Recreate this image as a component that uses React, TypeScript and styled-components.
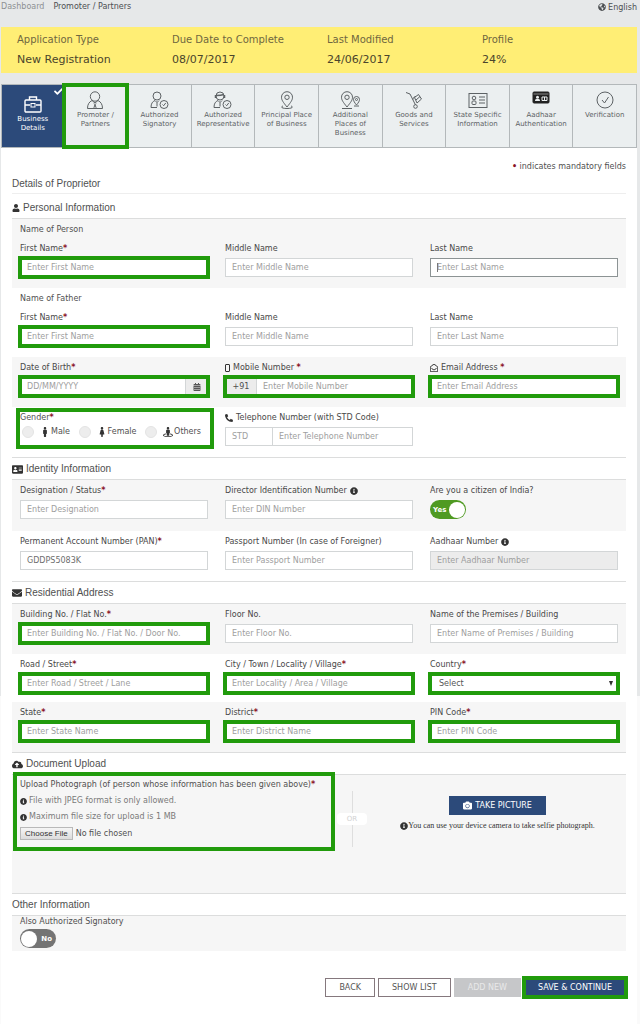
import React, { useId, useState } from "react";
import styled, { createGlobalStyle, css } from "styled-components";
import {
  FaAddressCard,
  FaCalendarAlt,
  FaCamera,
  FaCheck,
  FaCloudUploadAlt,
  FaEnvelope,
  FaFemale,
  FaGlobeAmericas,
  FaInfoCircle,
  FaMale,
  FaPhoneAlt,
  FaRegEnvelopeOpen,
  FaStreetView,
  FaUser,
} from "react-icons/fa";

const sans = `"DejaVu Sans", Verdana, sans-serif`;
const heading = `"Liberation Sans", Arial, sans-serif`;
const serif = `"Liberation Serif", "Times New Roman", serif`;
const green = "#219b0c";
const navy = "#2c4a7a";
const line = "#dcdddd";

const GlobalStyle = createGlobalStyle`
  *, *::before, *::after { box-sizing: border-box; }
  body {
    margin: 0;
    background: linear-gradient(#e6e8e9 696px, #fafafa 696px) no-repeat #fafafa;
    color: #505050;
    font-family: ${sans};
    font-size: 8px;
    line-height: 12px;
  }
  input, select, button { font-family: inherit; font-size: inherit; margin: 0; }
`;

const marked = css`
  outline: 4px solid ${green};
  outline-offset: -2px;
`;

const Page = styled.div`
  padding: 0 3px 0 1px;
`;

const TopBar = styled.header`
  display: flex;
  justify-content: space-between;
  padding: 0 0 13px;
  line-height: 14px;
`;

const Crumbs = styled.nav`
  display: flex;
  gap: 9px;
  a { color: #8d9093; text-decoration: none; }
  span { color: #4c4f52; }
`;

const Language = styled.button`
  display: flex;
  align-items: center;
  gap: 2px;
  padding: 0;
  border: 0;
  background: none;
  color: #4c4f52;
`;

const Summary = styled.dl`
  display: grid;
  grid-template-columns: repeat(4, 1fr);
  margin: 0;
  padding: 6px 0 6px 16px;
  background: #ffee75;
  line-height: 14px;
`;

const SummaryItem = styled.div`
  display: flex;
  flex-direction: column;
  gap: 6px;
  dt { font-size: 10px; color: #6f6740; }
  dd { margin: 0; font-size: 11px; color: #4b452c; }
`;

const Tabs = styled.nav`
  display: grid;
  grid-template-columns: 62fr repeat(9, 64fr);
  margin-top: 11px;
  border: 1px solid #b3b8ba;
`;

const Tab = styled.a<{ $done?: boolean; $marked?: boolean }>`
  position: relative;
  display: flex;
  flex-direction: column;
  align-items: center;
  gap: 2px;
  min-height: 62px;
  padding-top: ${(p) => (p.$done ? 10 : 6)}px;
  border-left: ${(p) => (p.$done || p.$marked ? 0 : 1)}px solid #b3b8ba;
  background: ${(p) => (p.$done ? navy : "#ebeff0")};
  color: ${(p) => (p.$done ? "#fff" : "#5d6265")};
  font-size: 7px;
  line-height: 9px;
  text-align: center;
  text-decoration: none;
  white-space: pre;
  ${(p) => p.$marked && css`${marked} z-index: 1;`}
  svg { flex: none; }
`;

const TabCheck = styled(FaCheck)`
  position: absolute;
  top: 2px;
  right: 1px;
`;

const Main = styled.main`
  min-height: 876px;
  padding: 13px 11px 24px;
  background: #fff;
`;

const Mandatory = styled.p`
  margin: 0;
  text-align: right;
`;

const Star = styled.span`
  color: #8a1226;
  font-weight: 700;
`;

const PageTitle = styled.h1`
  margin: 0;
  padding: 4px 0 2px;
  border-bottom: 1px solid #eee;
  font: 400 10px/14px ${heading};
`;

const SectionTitle = styled.h2<{ $first?: boolean }>`
  display: flex;
  align-items: center;
  gap: 3px;
  margin: 0;
  padding: ${(p) => (p.$first ? "7px 0 3px" : "4px 0 3px")};
  border-bottom: 1px solid ${line};
  border-top: ${(p) => (p.$first ? 0 : 1)}px solid ${line};
  font: 400 10px/14px ${heading};
  svg { color: #333; }
`;

const Row = styled.div<{ $shade?: boolean; $end?: number }>`
  display: grid;
  grid-template-columns: repeat(3, minmax(0, 1fr));
  column-gap: 17px;
  padding: 5px 8px ${(p) => p.$end ?? 11}px;
  background: ${(p) => (p.$shade ? "#f6f6f6" : "#fff")};
`;

const RowTitle = styled.h3`
  grid-column: 1 / -1;
  margin: 0 0 7px;
  font: inherit;
`;

const Field = styled.div`
  position: relative;
  display: flex;
  flex-direction: column;
  gap: 3px;
`;

const Label = styled.label`
  display: flex;
  align-items: center;
  gap: 3px;
  height: 12px;
  white-space: nowrap;
  color: #484848;
  svg { color: #333; }
`;

const Input = styled.input<{ $active?: boolean; $marked?: boolean }>`
  width: 100%;
  min-width: 0;
  height: 19px;
  padding: 0 6px;
  border: 1px solid ${(p) => (p.$active ? "#8c9394" : "#d3d6d7")};
  border-radius: 0;
  background: #fff;
  color: #6d6d6d;
  ${(p) => p.$marked && marked}
  &::placeholder { color: #9e9e9e; opacity: 1; }
  &:disabled { background: #ececec; }
`;

const Caret = styled.span`
  position: absolute;
  left: 7px;
  bottom: 5px;
  width: 1px;
  height: 9px;
  background: #777;
`;

const Group = styled.div<{ $marked?: boolean }>`
  display: flex;
  ${(p) => p.$marked && marked}
`;

const AddOn = styled.span`
  display: flex;
  flex: none;
  align-items: center;
  justify-content: center;
  width: 31px;
  border: 1px solid #d3d6d7;
  border-right: 0;
  background: #ececec;
`;

const DateButton = styled.button`
  display: flex;
  flex: none;
  align-items: center;
  justify-content: center;
  width: 22px;
  padding: 0;
  border: 1px solid #d3d6d7;
  border-left: 0;
  background: #ececec;
  color: #555;
`;

const StdInput = styled(Input)`
  flex: none;
  width: 25%;
  border-right: 0;
`;

const SelectWrap = styled.div`
  position: relative;
  ${marked}
  svg { position: absolute; right: 5px; top: 7px; pointer-events: none; }
`;

const Select = styled.select`
  display: block;
  width: 100%;
  height: 19px;
  padding: 0 8px;
  border: 1px solid #d3d6d7;
  appearance: none;
  background: #fff;
  color: #555;
`;

const GenderBox = styled.div`
  display: flex;
  flex-direction: column;
  height: 33px;
  margin-right: -2px;
  background: #fff;
  outline: 4px solid ${green};
`;

const RadioRow = styled.div`
  display: flex;
  justify-content: space-between;
  padding: 2px 9px 0 2px;
`;

const Choice = styled.label`
  display: flex;
  align-items: center;
  gap: 1px;
  svg { color: #333; }
`;

const Radio = styled.input`
  width: 12px;
  height: 12px;
  margin-right: 5px;
  border: 1px solid #e4e4e4;
  border-radius: 50%;
  appearance: none;
  background: #ededed;
  &:checked { background: #888; }
`;

const Switch = styled.label<{ $on: boolean }>`
  position: relative;
  display: flex;
  flex-direction: ${(p) => (p.$on ? "row" : "row-reverse")};
  align-items: center;
  justify-content: space-between;
  width: 36px;
  height: 19px;
  padding: ${(p) => (p.$on ? "0 1px 0 3px" : "0 4px 0 1px")};
  border-radius: 10px;
  background: ${(p) => (p.$on ? "#4f9a22" : "#747474")};
  color: #fff;
  font-size: 7px;
  font-weight: 700;
  input { position: absolute; inset: 0; width: 100%; height: 100%; opacity: 0; }
`;

const Knob = styled.span`
  width: 16px;
  height: 16px;
  border-radius: 50%;
  background: #fff;
`;

const UploadPanel = styled.div`
  display: grid;
  grid-template-columns: 323fr 34fr 257fr;
  align-items: start;
  height: 118px;
  background: #f6f6f6;
`;

const UploadBox = styled.div`
  display: flex;
  flex-direction: column;
  gap: 4px;
  margin: -3px 0 0 1px;
  padding: 3px 3px 6px;
  border: 4px solid ${green};
`;

const Note = styled.p`
  display: flex;
  align-items: center;
  gap: 2px;
  margin: 0;
  color: #7a7a7a;
  svg { color: #333; }
`;

const FileInput = styled.input`
  height: 14px;
  line-height: 12px;
  &::file-selector-button {
    height: 13px;
    margin: 0 3px 0 0;
    padding: 0 4px;
    border: 1px solid #b9b9b9;
    background: linear-gradient(#f6f6f6, #dcdcdc);
    color: #333;
    font: 8px/11px ${heading};
  }
`;

const Divider = styled.div`
  display: flex;
  flex-direction: column;
  align-items: center;
  margin: 16px 2px 0;
  color: #d2d2d2;
  &::before, &::after { content: ""; width: 1px; height: 22px; background: #dedede; }
  span { align-self: stretch; background: #fff; border-radius: 4px; text-align: center; font-size: 7px; }
`;

const Capture = styled.div`
  display: flex;
  flex-direction: column;
  align-items: center;
  gap: 5px;
  padding-top: 21px;
`;

const CaptureNote = styled.p`
  display: flex;
  align-items: center;
  margin: 0;
  color: #333;
  font-family: ${serif};
  white-space: nowrap;
`;

const Button = styled.button<{ $kind?: "primary" | "muted"; $marked?: boolean }>`
  display: flex;
  align-items: center;
  gap: 3px;
  height: 19px;
  padding: 0 13px;
  border: 1px solid ${(p) => (p.$kind === "primary" ? navy : p.$kind === "muted" ? "#c6c7c9" : "#85787d")};
  background: ${(p) => (p.$kind === "primary" ? navy : p.$kind === "muted" ? "#c6c7c9" : "#fff")};
  color: ${(p) => (p.$kind === "primary" ? "#fff" : p.$kind === "muted" ? "#e9e9ea" : "#555")};
  ${(p) => p.$marked && marked}
`;

const OtherPanel = styled.div`
  display: flex;
  flex-direction: column;
  gap: 1px;
  padding: 0 8px 3px;
  background: #f6f6f6;
`;

const Footer = styled.footer`
  display: flex;
  justify-content: flex-end;
  gap: 3px;
  margin-top: 27px;
`;

const Glyph = ({ w = 20, h = 18, children }: { w?: number; h?: number; children: React.ReactNode }) => (
  <svg width={w} height={h} viewBox={`0 0 ${w} ${h}`} fill="none" stroke="currentColor" strokeWidth="1" aria-hidden="true">
    {children}
  </svg>
);

const Person = () => (
  <>
    <circle cx="7" cy="5" r="4" />
    <path d="M1 16.5c0-4 1.500-6 4-7l2 2 2-2M1 16.500h6M7 11.500v4" />
  </>
);

const SmallCheck = () => (
  <>
    <circle cx="14" cy="13.500" r="4" />
    <path d="M12.500 13.500l1.200 1.200 2-2.700" />
  </>
);

const Pin = () => (
  <>
    <path d="M8 16C4 11 2.500 9 2.500 6.200a5.500 5.500 0 0 1 11 0C13.500 9 12 11 8 16z" />
    <circle cx="8" cy="6.300" r="2.200" />
  </>
);

const tabs: { text: string; icon: React.ReactNode; done?: boolean; marked?: boolean }[] = [
  {
    text: "Business\nDetails",
    done: true,
    icon: (
      <Glyph>
        <rect x="2" y="5" width="16" height="12" rx="1" strokeWidth="1.400" />
        <path d="M6.500 5V2h7v3M2 10h5M13 10h5" strokeWidth="1.400" />
        <rect x="8" y="8.500" width="4" height="3.500" />
      </Glyph>
    ),
  },
  {
    text: "Promoter /\nPartners",
    marked: true,
    icon: (
      <Glyph>
        <circle cx="10" cy="5.500" r="4.700" />
        <path d="M2.500 17.500c0-4 1.500-6.500 4.500-8l3 2.500 3-2.500c3 1.500 4.500 4 4.500 8zM9 12.500l1 1-1 3 1 1 1-1-1-3 1-1" />
      </Glyph>
    ),
  },
  { text: "Authorized\nSignatory", icon: <Glyph><Person /><SmallCheck /></Glyph> },
  {
    text: "Authorized\nRepresentative",
    icon: (
      <Glyph>
        <Person />
        <path d="M2.500 4v3M11.500 4v3M3 4.500c2 0 5 0 8-1" strokeWidth="1.500" />
        <SmallCheck />
      </Glyph>
    ),
  },
  {
    text: "Principal Place\nof Business",
    icon: <Glyph w={16}><Pin /><path d="M4 15c-3 1-1 2.500 4 2.500s7-1.500 4-2.500" /></Glyph>,
  },
  {
    text: "Additional\nPlaces of\nBusiness",
    icon: (
      <Glyph w={22}>
        <Pin />
        <path d="M3 17.500h10M17.500 14c-2-2.500-3-4-3-5.500a3 3 0 0 1 6 0c0 1.500-1 3-3 5.500zM15 15h5" />
        <circle cx="17.500" cy="8.500" r="1" />
      </Glyph>
    ),
  },
  {
    text: "Goods and\nServices",
    icon: (
      <Glyph w={18}>
        <path d="M1 1.500l4 1.500 5.500 11" />
        <path d="M9.500 6.500l4-3 3 4.500-4.500 4zM8 8.500c0-2 1.500-3 3-3M15 5.500l-4 3.500" />
        <circle cx="10.500" cy="15.500" r="1.800" />
      </Glyph>
    ),
  },
  {
    text: "State Specific\nInformation",
    icon: (
      <Glyph>
        <rect x="1" y="2.500" width="18" height="14" />
        <path d="M11 6h6M11 9h6M11 12h6" />
        <circle cx="6" cy="7" r="1.800" />
        <rect x="4" y="10" width="4" height="3.500" rx="1" />
      </Glyph>
    ),
  },
  {
    text: "Aadhaar\nAuthentication",
    icon: (
      <Glyph>
        <rect x="2" y="1" width="16" height="11" rx="1" fill="#222" stroke="#222" />
        <path d="M2.500 3h15" stroke="#888" />
        <path d="M11 6h5v3.500h-5zM13.500 6v3.500" stroke="#ebeff0" />
        <path d="M4 10c0-2 1-2 2.500-2S9 8 9 10z" fill="#ebeff0" stroke="none" />
        <circle cx="6.500" cy="6.300" r="1.500" fill="#ebeff0" stroke="none" />
      </Glyph>
    ),
  },
  {
    text: "Verification",
    icon: <Glyph><circle cx="10" cy="9" r="8" /><path d="M7 9l2.500 3L13.500 6" /></Glyph>,
  },
];

const MobileIcon = () => (
  <svg width="5" height="8" viewBox="0 0 5 8" fill="none" stroke="currentColor" aria-hidden="true">
    <rect x="0.500" y="0.500" width="4" height="7" rx="0.500" />
  </svg>
);

type TextFieldProps = {
  label: string;
  hint?: string;
  value?: string;
  required?: boolean;
  marked?: boolean;
  active?: boolean;
  disabled?: boolean;
  spaced?: boolean;
  icon?: React.ReactNode;
  info?: boolean;
};

function FieldLabel({ id, label, required, icon, info, spaced }: TextFieldProps & { id: string }) {
  return (
    <Label htmlFor={id}>
      {icon}
      <span>
        {label}
        {spaced && " "}
        {required && <Star>*</Star>}
      </span>
      {info && <FaInfoCircle size={8} />}
    </Label>
  );
}

function TextField(props: TextFieldProps) {
  const id = useId();
  return (
    <Field>
      <FieldLabel id={id} {...props} />
      <Input
        id={id}
        type="text"
        placeholder={props.hint}
        defaultValue={props.value}
        disabled={props.disabled}
        $marked={props.marked}
        $active={props.active}
      />
      {props.active && <Caret />}
    </Field>
  );
}

function Toggle({ initial, label }: { initial: boolean; label: string }) {
  const [on, setOn] = useState(initial);
  return (
    <Switch $on={on}>
      <input type="checkbox" aria-label={label} checked={on} onChange={() => setOn(!on)} />
      <span>{on ? "Yes" : "No"}</span>
      <Knob />
    </Switch>
  );
}

export default function App() {
  return (
    <Page>
      <GlobalStyle />
      <TopBar>
        <Crumbs aria-label="Breadcrumb">
          <a href="#dashboard">Dashboard</a>
          <span>Promoter / Partners</span>
        </Crumbs>
        <Language type="button"><FaGlobeAmericas size={8} /> English</Language>
      </TopBar>
      <Summary>
        <SummaryItem><dt>Application Type</dt><dd>New Registration</dd></SummaryItem>
        <SummaryItem><dt>Due Date to Complete</dt><dd>08/07/2017</dd></SummaryItem>
        <SummaryItem><dt>Last Modified</dt><dd>24/06/2017</dd></SummaryItem>
        <SummaryItem><dt>Profile</dt><dd>24%</dd></SummaryItem>
      </Summary>
      <Tabs aria-label="Registration steps">
        {tabs.map((t) => (
          <Tab key={t.text} href="#step" $done={t.done} $marked={t.marked}>
            {t.icon}
            <span>{t.text}</span>
            {t.done && <TabCheck size={9} />}
          </Tab>
        ))}
      </Tabs>
      <Main>
        <Mandatory><Star>•</Star> indicates mandatory fields</Mandatory>
        <PageTitle>Details of Proprietor</PageTitle>

        <SectionTitle $first><FaUser size={8} />Personal Information</SectionTitle>
        <Row $shade>
          <RowTitle>Name of Person</RowTitle>
          <TextField label="First Name" hint="Enter First Name" required marked />
          <TextField label="Middle Name" hint="Enter Middle Name" />
          <TextField label="Last Name" hint="Enter Last Name" active />
        </Row>
        <Row>
          <RowTitle>Name of Father</RowTitle>
          <TextField label="First Name" hint="Enter First Name" required marked />
          <TextField label="Middle Name" hint="Enter Middle Name" />
          <TextField label="Last Name" hint="Enter Last Name" />
        </Row>
        <Row $shade>
          <Field>
            <FieldLabel id="dob" label="Date of Birth" required />
            <Group $marked>
              <Input id="dob" type="text" placeholder="DD/MM/YYYY" />
              <DateButton type="button" aria-label="Open calendar"><FaCalendarAlt size={8} /></DateButton>
            </Group>
          </Field>
          <Field>
            <FieldLabel id="mobile" label="Mobile Number" required spaced icon={<MobileIcon />} />
            <Group $marked>
              <AddOn>+91</AddOn>
              <Input id="mobile" type="tel" placeholder="Enter Mobile Number" />
            </Group>
          </Field>
          <TextField
            label="Email Address"
            hint="Enter Email Address"
            required
            spaced
            marked
            icon={<FaRegEnvelopeOpen size={8} />}
          />
        </Row>
        <Row>
          <GenderBox role="radiogroup" aria-labelledby="gender">
            <span id="gender">Gender<Star>*</Star></span>
            <RadioRow>
              <Choice><Radio type="radio" name="gender" /><FaMale size={10} />Male</Choice>
              <Choice><Radio type="radio" name="gender" /><FaFemale size={10} />Female</Choice>
              <Choice><Radio type="radio" name="gender" /><FaStreetView size={10} />Others</Choice>
            </RadioRow>
          </GenderBox>
          <Field>
            <FieldLabel id="phone" label="Telephone Number (with STD Code)" icon={<FaPhoneAlt size={8} />} />
            <Group>
              <StdInput type="tel" aria-label="STD code" placeholder="STD" />
              <Input id="phone" type="tel" placeholder="Enter Telephone Number" />
            </Group>
          </Field>
        </Row>

        <SectionTitle><FaAddressCard size={11} />Identity Information</SectionTitle>
        <Row $shade $end={12}>
          <TextField label="Designation / Status" hint="Enter Designation" required />
          <TextField label="Director Identification Number" hint="Enter DIN Number" info />
          <Field>
            <Label as="span">Are you a citizen of India?</Label>
            <Toggle initial label="Are you a citizen of India?" />
          </Field>
        </Row>
        <Row>
          <TextField label="Permanent Account Number (PAN)" value="GDDPS5083K" required />
          <TextField label="Passport Number (In case of Foreigner)" hint="Enter Passport Number" />
          <TextField label="Aadhaar Number" hint="Enter Aadhaar Number" info disabled />
        </Row>

        <SectionTitle><FaEnvelope size={10} />Residential Address</SectionTitle>
        <Row $shade>
          <TextField label="Building No. / Flat No." hint="Enter Building No. / Flat No. / Door No." required marked />
          <TextField label="Floor No." hint="Enter Floor No." />
          <TextField label="Name of the Premises / Building" hint="Enter Name of Premises / Building" />
        </Row>
        <Row $end={9}>
          <TextField label="Road / Street" hint="Enter Road / Street / Lane" required marked />
          <TextField label="City / Town / Locality / Village" hint="Enter Locality / Area / Village" required marked />
          <Field>
            <FieldLabel id="country" label="Country" required />
            <SelectWrap>
              <Select id="country"><option>Select</option></Select>
              <svg width="4" height="5" viewBox="0 0 4 5" aria-hidden="true"><path d="M0 0h4L2 5z" fill="#333" /></svg>
            </SelectWrap>
          </Field>
        </Row>
        <Row $shade>
          <TextField label="State" hint="Enter State Name" required marked />
          <TextField label="District" hint="Enter District Name" required marked />
          <TextField label="PIN Code" hint="Enter PIN Code" required marked />
        </Row>

        <SectionTitle><FaCloudUploadAlt size={11} />Document Upload</SectionTitle>
        <UploadPanel>
          <UploadBox>
            <label htmlFor="photo">
              Upload Photograph (of person whose information has been given above)<Star>*</Star>
            </label>
            <Note><FaInfoCircle size={7} /> File with JPEG format is only allowed.</Note>
            <Note><FaInfoCircle size={7} /> Maximum file size for upload is 1 MB</Note>
            <FileInput id="photo" type="file" accept="image/jpeg" />
          </UploadBox>
          <Divider><span>OR</span></Divider>
          <Capture>
            <Button type="button" $kind="primary"><FaCamera size={9} />TAKE PICTURE</Button>
            <CaptureNote>
              <FaInfoCircle size={8} />You can use your device camera to take selfie photograph.
            </CaptureNote>
          </Capture>
        </UploadPanel>

        <SectionTitle>Other Information</SectionTitle>
        <OtherPanel>
          <span>Also Authorized Signatory</span>
          <Toggle initial={false} label="Also Authorized Signatory" />
        </OtherPanel>

        <Footer>
          <Button type="button">BACK</Button>
          <Button type="button">SHOW LIST</Button>
          <Button type="button" $kind="muted">ADD NEW</Button>
          <Button type="button" $kind="primary" $marked>SAVE &amp; CONTINUE</Button>
        </Footer>
      </Main>
    </Page>
  );
}
